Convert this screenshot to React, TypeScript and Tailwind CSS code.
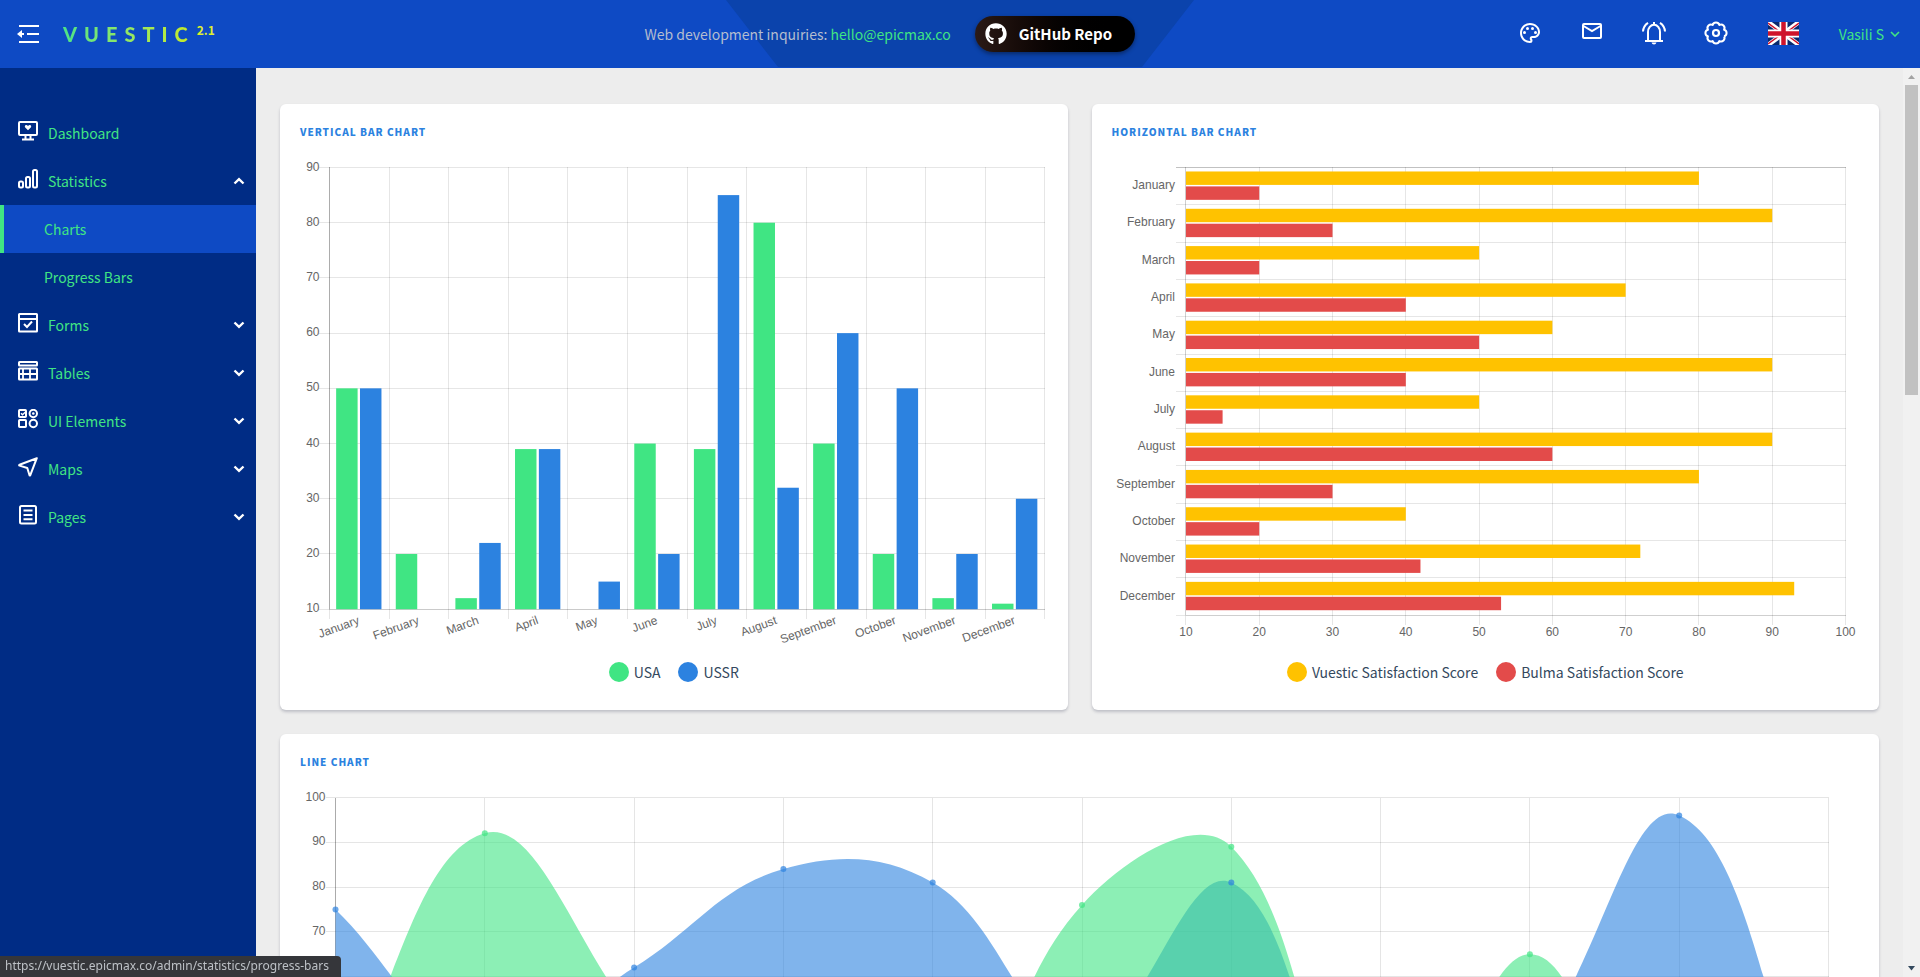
import type { ReactNode } from 'react'
import { FaGithub } from 'react-icons/fa'
import { MdOutlinePalette } from 'react-icons/md'

const GREEN = '#40e583'
const BLUE = '#2c82e0'
const YELLOW = '#ffc200'
const RED = '#e34b4a'

const MONTHS = [
  'January', 'February', 'March', 'April', 'May', 'June',
  'July', 'August', 'September', 'October', 'November', 'December',
]

const range = (from: number, to: number, step: number) =>
  Array.from({ length: Math.round((to - from) / step) + 1 }, (_, i) => from + i * step)

/* ---------- icons ---------- */

function NavSvg({ children }: { children: ReactNode }) {
  return (
    <svg width="20" height="20" viewBox="0 0 20 20" fill="none" stroke="#fff" strokeWidth="2" className="mb-1 shrink-0" aria-hidden="true">
      {children}
    </svg>
  )
}

const DashboardIcon = () => (
  <NavSvg>
    <rect x="1" y="1" width="18" height="13" rx="1" />
    <path d="M7.5 14v4M12.5 14v4M4 18.5h12" />
    <path d="M10 9.2 7.2 6.4a1.4 1.4 0 0 1 0-1.9c.7-.7 1.900-.6 2.800.5.9-1.100 2.100-1.200 2.800-.5a1.400 1.400 0 0 1 0 1.900z" fill="#fff" stroke="none" />
  </NavSvg>
)
const StatisticsIcon = () => (
  <NavSvg>
    <rect x="1" y="12.500" width="4" height="6" rx="1.500" />
    <rect x="8" y="8" width="4" height="10.500" rx="1.500" />
    <rect x="15" y="1" width="4" height="17.500" rx="1.500" />
  </NavSvg>
)
const FormsIcon = () => (
  <NavSvg>
    <rect x="1" y="1" width="18" height="17.500" rx=".5" />
    <path d="M1 6h18M6 11l3 3 5-5.500" />
  </NavSvg>
)
const TablesIcon = () => (
  <NavSvg>
    <rect x="1" y="1" width="18" height="3.500" rx=".5" />
    <rect x="1" y="7.500" width="18" height="11" rx=".5" />
    <path d="M1 13h18M5 7.500v11M12 7.500v11" strokeWidth="1.800" />
  </NavSvg>
)
const ElementsIcon = () => (
  <NavSvg>
    <rect x="1" y="1" width="7" height="7" rx=".8" />
    <path d="m3 4.200 1.500 1.500L7.500 3" strokeWidth="1.400" />
    <circle cx="15.300" cy="4.500" r="3.700" />
    <circle cx="15.300" cy="4.500" r="1.300" fill="#fff" stroke="none" />
    <rect x="1" y="11" width="7" height="7" rx=".8" />
    <circle cx="15.300" cy="14.500" r="3.700" />
  </NavSvg>
)
const MapsIcon = () => (
  <NavSvg>
    <path d="M18.800 1.200 1.500 7.800a.4.4 0 0 0 0 .8l7.800 2.400 2.200 7.200a.4.4 0 0 0 .8 0z" strokeLinejoin="round" />
  </NavSvg>
)
const PagesIcon = () => (
  <NavSvg>
    <rect x="2" y="1" width="16" height="17.500" rx="1.500" />
    <path d="M5.500 5.500h9M5.500 10h9M5.500 14.200h9" />
  </NavSvg>
)

function Chevron({ up = false }: { up?: boolean }) {
  return (
    <svg width="12" height="8" viewBox="0 0 12 8" fill="none" stroke="#fff" strokeWidth="2.400" className="ml-auto shrink-0" aria-hidden="true">
      <path d={up ? 'M1.500 6.500 6 2.200l4.500 4.300' : 'M1.500 1.500 6 5.800l4.500-4.300'} />
    </svg>
  )
}

const MenuIcon = () => (
  <svg width="22" height="20" viewBox="0 0 22 20" fill="none" stroke="#fff" strokeWidth="2" aria-hidden="true">
    <path d="M2 2h20M10 10h12M2 18h20M2 10h5" />
    <path d="M0 10l5-4v8z" fill="#fff" stroke="none" />
  </svg>
)
const MailIcon = () => (
  <svg width="20" height="16" viewBox="0 0 20 16" fill="none" stroke="#fff" strokeWidth="2" className="mb-1" aria-hidden="true">
    <rect x="1" y="1" width="18" height="14" rx="1" />
    <path d="m1.500 3 8.500 5 8.500-5" />
  </svg>
)
const BellIcon = () => (
  <svg width="24" height="24" viewBox="0 0 24 24" fill="none" stroke="#fff" strokeWidth="2" aria-hidden="true">
    <path d="M3 20h18" />
    <path d="M6 20v-9a6 7.200 0 0 1 12 0v9" />
    <path d="M12 1v3" />
    <path d="M9.500 21.500a2.600 2.600 0 0 0 5 0z" fill="#fff" stroke="none" />
    <path d="M1 10.500C1.200 7 3 3.800 6 1.800M23 10.500C22.800 7 21 3.800 18 1.800" />
  </svg>
)

function CogIcon() {
  const valleys = range(0, 8, 1).map((i) => {
    const a = ((i * 45 + 22.5) * Math.PI) / 180
    return [12 + 8.7 * Math.cos(a), 12 + 8.7 * Math.sin(a)]
  })
  const d = valleys
    .map(([x, y], i) => (i === 0 ? `M${x.toFixed(2)} ${y.toFixed(2)}` : `A3.450 3.450 0 0 1 ${x.toFixed(2)} ${y.toFixed(2)}`))
    .join('')
  return (
    <svg width="24" height="24" viewBox="0 0 24 24" fill="none" stroke="#fff" strokeWidth="2" aria-hidden="true">
      <path d={d} strokeLinejoin="round" />
      <circle cx="12" cy="12" r="3" strokeWidth="2.200" />
    </svg>
  )
}

const FlagIcon = () => (
  <svg width="31" height="23" viewBox="0 0 62 46" aria-hidden="true">
    <path fill="#0a2a6e" d="M0 0h62v46H0z" />
    <path stroke="#fff" strokeWidth="9" d="m0 0 62 46M62 0 0 46" />
    <path stroke="#cf142b" strokeWidth="3" d="M0 2l27 20M35 24l27 20M62 2 35 22M27 24 0 44" />
    <path stroke="#fff" strokeWidth="16" d="M31 0v46M0 23h62" />
    <path stroke="#cf142b" strokeWidth="9" d="M31 0v46M0 23h62" />
  </svg>
)

/* ---------- header ---------- */

function IconButton({ label, children }: { label: string; children: ReactNode }) {
  return (
    <button type="button" aria-label={label} className="flex h-6 w-6 items-center justify-center text-white">
      {children}
    </button>
  )
}

function Header() {
  return (
    <header className="relative flex h-[68px] shrink-0 items-center bg-[#0e4ac4]">
      <svg className="absolute left-1/2 top-0 -translate-x-1/2" width="468" height="68" viewBox="0 0 468 68" aria-hidden="true">
        <path d="M0 0h468l-52 67H52z" fill="#0b43ac" />
      </svg>
      <div className="flex flex-1 items-center pl-[17px]">
        <button type="button" aria-label="Toggle menu">
          <MenuIcon />
        </button>
        <a href="#" className="ml-6 flex items-start gap-[2px]">
          <span className="bg-linear-to-r from-[#4ae387] to-[#c8ea14] bg-clip-text font-[Lato,sans-serif] text-[20px] leading-6 font-black tracking-[7px] text-transparent">
            VUESTIC
          </span>
          <span className="text-[12px] leading-4 font-bold text-[#dff02f]">2.1</span>
        </a>
      </div>
      <div className="relative flex items-center pr-[138px]">
        <p className="text-[14px] leading-6 text-[#b4bdcf]">
          Web development inquiries: <a href="#" className="text-[#40e583]">hello@epicmax.co</a>
        </p>
        <button type="button" className="ml-6 flex h-9 w-40 items-center rounded-full bg-linear-to-r from-[#2b1a16] to-black to-90% pl-[10px] text-[15px] font-bold text-white shadow-[0_2px_4px_rgba(0,0,0,0.4)]">
          <FaGithub size={22} aria-hidden="true" />
          <span className="ml-3">GitHub Repo</span>
        </button>
      </div>
      <div className="flex flex-1 items-center justify-end gap-[38px] pr-5">
        <div className="flex items-center gap-[38px] pb-[2px]">
          <IconButton label="Color theme"><MdOutlinePalette size={24} /></IconButton>
          <IconButton label="Messages"><MailIcon /></IconButton>
          <IconButton label="Notifications"><BellIcon /></IconButton>
          <IconButton label="Settings"><CogIcon /></IconButton>
          <button type="button" aria-label="Language" className="px-[2px]"><FlagIcon /></button>
        </div>
        <button type="button" className="flex items-center gap-[6px] text-[14px] leading-6 text-[#40e583]">
          Vasili S
          <svg width="10" height="6" viewBox="0 0 10 6" fill="none" stroke="currentColor" strokeWidth="1.600" aria-hidden="true">
            <path d="m1 1 4 4 4-4" />
          </svg>
        </button>
      </div>
    </header>
  )
}

/* ---------- sidebar ---------- */

function NavGroup({ icon, label, open = false }: { icon: ReactNode; label: string; open?: boolean }) {
  return (
    <button type="button" aria-expanded={open} className="flex h-12 w-full items-center gap-[10px] pr-[11px] pl-[18px] text-left">
      {icon}
      <span>{label}</span>
      <Chevron up={open} />
    </button>
  )
}

function Sidebar() {
  return (
    <nav className="w-64 shrink-0 bg-[#002c85] pt-[41px] text-[14px] leading-6 text-[#40e583]">
      <a href="#" className="flex h-12 items-center gap-[10px] pl-[18px]">
        <DashboardIcon />
        <span>Dashboard</span>
      </a>
      <NavGroup icon={<StatisticsIcon />} label="Statistics" open />
      <a href="#" className="flex h-12 items-center border-l-4 border-[#40e583] bg-[#0e4ac4] pl-10">Charts</a>
      <a href="#" className="flex h-12 items-center pl-11">Progress Bars</a>
      <NavGroup icon={<FormsIcon />} label="Forms" />
      <NavGroup icon={<TablesIcon />} label="Tables" />
      <NavGroup icon={<ElementsIcon />} label="UI Elements" />
      <NavGroup icon={<MapsIcon />} label="Maps" />
      <NavGroup icon={<PagesIcon />} label="Pages" />
    </nav>
  )
}

/* ---------- charts ---------- */

const chartText = 'fill-[#666] font-[Liberation_Sans,Arial,sans-serif] text-[12px]'

function Grid({ xs, ys, left, right, top, bottom }: { xs: number[]; ys: number[]; left: number; right: number; top: number; bottom: number }) {
  return (
    <g stroke="#000" strokeOpacity=".1" shapeRendering="crispEdges">
      {xs.map((x) => <line key={`x${x}`} x1={x} x2={x} y1={top} y2={bottom + 10} />)}
      {ys.map((y) => <line key={`y${y}`} x1={left - 10} x2={right} y1={y} y2={y} />)}
    </g>
  )
}

function VerticalBarChart() {
  const left = 29.5, right = 745.5, top = 7.5, bottom = 449.5
  const usa = [50, 20, 12, 39, 10, 40, 39, 80, 40, 20, 12, 11]
  const ussr = [50, 10, 22, 39, 15, 20, 85, 32, 60, 50, 20, 30]
  const cat = (right - left) / 12
  const y = (v: number) => bottom - ((v - 10) / 80) * (bottom - top)
  const ticks = range(10, 90, 10)
  const bar = cat * 0.36
  return (
    <svg viewBox="0 0 748 482" className="block w-full overflow-visible" role="img" aria-label="Vertical bar chart">
      <Grid xs={range(0, 12, 1).map((i) => left + i * cat)} ys={ticks.map(y)} left={left} right={right} top={top} bottom={bottom} />
      <g stroke="#000" shapeRendering="crispEdges">
        <line x1={left} x2={left} y1={top} y2={bottom} strokeOpacity=".25" />
        <line x1={left} x2={right} y1={bottom} y2={bottom} strokeOpacity=".12" />
      </g>
      {MONTHS.map((m, i) => (
        <g key={m}>
          <rect x={left - 0.5 + i * cat + cat * 0.12} y={y(usa[i])} width={bar} height={bottom - y(usa[i])} fill={GREEN} />
          <rect x={left - 0.5 + i * cat + cat * 0.52} y={y(ussr[i])} width={bar} height={bottom - y(ussr[i])} fill={BLUE} />
          <text textAnchor="end" className={chartText} transform={`translate(${left - 0.5 + (i + 0.5) * cat} 460) rotate(-20)`} y="4">{m}</text>
        </g>
      ))}
      {ticks.map((t) => <text key={t} x={left - 10} y={y(t) + 3} textAnchor="end" className={chartText}>{t}</text>)}
    </svg>
  )
}

function HorizontalBarChart() {
  const left = 74, right = 734, top = 7.5, bottom = 455.5
  const vuestic = [80, 90, 50, 70, 60, 90, 50, 90, 80, 40, 72, 93]
  const bulma = [20, 30, 20, 40, 50, 40, 15, 60, 30, 20, 42, 53]
  const cat = (bottom - top) / 12
  const x = (v: number) => left + ((v - 10) / 90) * (right - left)
  const ticks = range(10, 100, 10)
  const bar = cat * 0.36
  return (
    <svg viewBox="0 0 748 482" className="block w-full overflow-visible" role="img" aria-label="Horizontal bar chart">
      <Grid xs={ticks.map(x)} ys={range(0, 12, 1).map((i) => top + i * cat)} left={left} right={right} top={top} bottom={bottom} />
      <g stroke="#000" shapeRendering="crispEdges">
        <line x1={left - 10} x2={right} y1={top} y2={top} strokeOpacity=".16" />
        <line x1={left} x2={left} y1={top} y2={bottom} strokeOpacity=".1" />
        <line x1={left} x2={right} y1={bottom} y2={bottom} strokeOpacity=".1" />
      </g>
      {MONTHS.map((m, i) => (
        <g key={m}>
          <rect x={left} y={top - 0.5 + i * cat + cat * 0.12} width={x(vuestic[i]) - left} height={bar} fill={YELLOW} />
          <rect x={left} y={top - 0.5 + i * cat + cat * 0.52} width={x(bulma[i]) - left} height={bar} fill={RED} />
          <text x={left - 11} y={top + (i + 0.5) * cat + 3} textAnchor="end" className={chartText}>{m}</text>
        </g>
      ))}
      {ticks.map((t) => <text key={t} x={x(t)} y={bottom + 21} textAnchor="middle" className={chartText}>{t}</text>)}
    </svg>
  )
}

type Point = [number, number]

/* Smooth curve through the points; the handles lean on the distance to each neighbour. */
function spline(points: Point[], tension: number) {
  const handles = points.map((p, i) => {
    const a = points[i - 1] ?? p
    const b = points[i + 1] ?? p
    const da = Math.hypot(p[0] - a[0], p[1] - a[1])
    const db = Math.hypot(b[0] - p[0], b[1] - p[1])
    const fa = (tension * da) / (da + db)
    const fb = (tension * db) / (da + db)
    return {
      before: [p[0] - fa * (b[0] - a[0]), p[1] - fa * (b[1] - a[1])],
      after: [p[0] + fb * (b[0] - a[0]), p[1] + fb * (b[1] - a[1])],
    }
  })
  return points
    .map((p, i) => (i === 0 ? `M${p.join(' ')}` : `C${handles[i - 1].after.join(' ')} ${handles[i].before.join(' ')} ${p.join(' ')}`))
    .join('')
}

function LineChart() {
  const left = 35.5, right = 1528.5, top = 7.5, unit = 4.475
  const bottom = top + 90 * unit
  const green = [32, 92, 51, 10, 16, 76, 89, 10, 65, 10, 30]
  const blue = [75, 43, 62, 84, 81, 46, 81, 15, 43, 96, 13]
  const step = (right - left) / 10
  const y = (v: number) => top + (100 - v) * unit
  const toPoints = (values: number[]): Point[] => values.map((v, i) => [left + i * step, y(v)])
  const ticks = range(10, 100, 10)
  const series = [
    { color: BLUE, points: toPoints(blue) },
    { color: GREEN, points: toPoints(green) },
  ]
  return (
    <svg viewBox="0 0 1559 450" className="block w-full" role="img" aria-label="Line chart">
      <Grid xs={range(0, 10, 1).map((i) => left + i * step)} ys={ticks.map(y)} left={left} right={right} top={top} bottom={bottom} />
      <line x1={left} x2={left} y1={top} y2={bottom} stroke="#000" strokeOpacity=".25" shapeRendering="crispEdges" />
      {series.map((s) => (
        <path key={s.color} d={`${spline(s.points, 0.4)}V${bottom}H${left}Z`} fill={s.color} fillOpacity=".6" />
      ))}
      {[...series].reverse().map((s) =>
        s.points.map(([px, py]) => <circle key={`${s.color}${px}`} cx={px} cy={py} r="3" fill={s.color} fillOpacity=".7" />),
      )}
      {ticks.map((t) => <text key={t} x={left - 10} y={y(t) + 3} textAnchor="end" className={chartText}>{t}</text>)}
    </svg>
  )
}

function Legend({ items }: { items: { label: string; dot: string }[] }) {
  return (
    <ul className="mt-5 flex h-5 items-center justify-center gap-[18px]">
      {items.map((item) => (
        <li key={item.label} className="flex items-center gap-[5px] text-[14px] leading-5 text-[#34495e]">
          <span className={`h-5 w-5 rounded-full ${item.dot}`} />
          {item.label}
        </li>
      ))}
    </ul>
  )
}

function Card({ title, children, className = '' }: { title: string; children: ReactNode; className?: string }) {
  return (
    <section className={`rounded-md bg-white px-5 pt-5 pb-7 shadow-[0_2px_3px_rgba(52,56,85,0.25)] ${className}`}>
      <h2 className="mb-5 text-[10px] leading-4 font-black tracking-[1px] text-[#2c82e0] uppercase">{title}</h2>
      {children}
    </section>
  )
}

function ScrollTrack() {
  return (
    <div className="flex w-[17px] shrink-0 flex-col items-center bg-[#f1f1f1]" aria-hidden="true">
      <svg width="17" height="17" viewBox="0 0 17 17" className="shrink-0">
        <path d="M5 11h7L8.500 7z" fill="#a3a3a3" />
      </svg>
      <div className="w-[13px] flex-[310_1_0%] bg-[#c1c1c1]" />
      <div className="flex-[565_1_0%]" />
      <svg width="17" height="17" viewBox="0 0 17 17" className="shrink-0">
        <path d="M5 6h7L8.500 10.500z" fill="#34495e" />
      </svg>
    </div>
  )
}

export default function App() {
  return (
    <div className="flex h-screen flex-col overflow-hidden bg-[#ededed] font-['Noto_Sans_CJK_SC','Noto_Sans',sans-serif]">
      <Header />
      <div className="flex min-h-0 flex-1">
        <Sidebar />
        <main className="min-w-0 flex-1 overflow-y-auto px-6 pt-9 [scrollbar-width:none]">
          <div className="grid grid-cols-2 gap-6">
            <Card title="Vertical bar chart">
              <VerticalBarChart />
              <Legend items={[{ label: 'USA', dot: 'bg-[#40e583]' }, { label: 'USSR', dot: 'bg-[#2c82e0]' }]} />
            </Card>
            <Card title="Horizontal bar chart">
              <HorizontalBarChart />
              <Legend items={[{ label: 'Vuestic Satisfaction Score', dot: 'bg-[#ffc200]' }, { label: 'Bulma Satisfaction Score', dot: 'bg-[#e34b4a]' }]} />
            </Card>
            <Card title="Line chart" className="col-span-2">
              <LineChart />
            </Card>
          </div>
        </main>
        <ScrollTrack />
      </div>
      <div className="fixed bottom-0 left-0 h-[21px] rounded-tr-[4px] bg-[#35363a] pr-3 pl-[5px] font-['Noto_Sans',sans-serif] text-[12px] leading-5 text-[#bdc1c6]">
        https://vuestic.epicmax.co/admin/statistics/progress-bars
      </div>
    </div>
  )
}
